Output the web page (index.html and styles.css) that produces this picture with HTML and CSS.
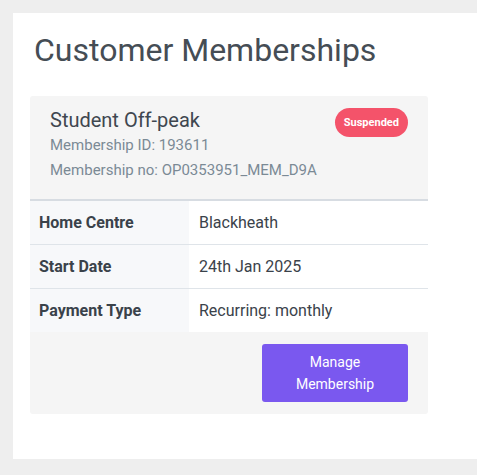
FILE: index.html
```html
<!DOCTYPE html>
<html>
<head>
<meta charset="utf-8">
<link rel="stylesheet" href="styles.css">
</head>
<body>
<div class="panel">
  <h1 class="title">Customer Memberships</h1>
  <div class="card">
    <div class="card-header">
      <div class="info">
        <h2 class="name">Student Off-peak</h2>
        <p class="meta">Membership ID: 193611</p>
        <p class="meta">Membership no: OP0353951_MEM_D9A</p>
      </div>
      <span class="badge">Suspended</span>
    </div>
    <div class="rows">
      <div class="row"><div class="label">Home Centre</div><div class="value">Blackheath</div></div>
      <div class="row"><div class="label">Start Date</div><div class="value">24th Jan 2025</div></div>
      <div class="row"><div class="label">Payment Type</div><div class="value">Recurring: monthly</div></div>
    </div>
    <div class="actions">
      <button class="btn">Manage<br>Membership</button>
    </div>
  </div>
</div>
</body>
</html>
```
FILE: styles.css
```css
html, body { overflow: hidden; }
body {
  margin: 0;
  padding: 13px 0 0 13px;
  background: #eeeeee;
  font-family: Roboto, "Liberation Sans", sans-serif;
}
.panel {
  width: 464px;
  background: #ffffff;
  padding: 17px 0 45px 17px;
  box-sizing: border-box;
}
.title {
  margin: 0 0 26px 4px;
  font-size: 32px;
  line-height: 40px;
  font-weight: 400;
  color: #454d55;
}
.card {
  width: 398px;
  background: #f5f5f5;
  border-radius: 3px;
  padding-bottom: 12px;
}
.card-header {
  display: flex;
  justify-content: space-between;
  align-items: flex-start;
  padding: 11px 20px 16px 20px;
  border-bottom: 2px solid #d7dce2;
}
.name {
  margin: 0;
  font-size: 20px;
  line-height: 26px;
  font-weight: 400;
  color: #3f4750;
}
.meta {
  margin: 0;
  font-size: 15px;
  line-height: 25px;
  color: #7b8a95;
}
.badge {
  margin-top: 1px;
  background: #f4536a;
  color: #ffffff;
  font-size: 11px;
  font-weight: 700;
  line-height: 29px;
  padding: 0 9px;
  border-radius: 15px;
}
.row {
  display: flex;
  height: 43px;
  border-bottom: 1px solid #dfe4e9;
}
.row:last-child { border-bottom: none; }
.label {
  width: 159px;
  box-sizing: border-box;
  padding-left: 9px;
  background: #f7f8fa;
  display: flex;
  align-items: center;
  font-size: 16px;
  font-weight: 700;
  color: #3a424a;
}
.value {
  flex: 1;
  padding-left: 10px;
  background: #ffffff;
  display: flex;
  align-items: center;
  font-size: 16px;
  color: #3a424a;
}
.actions {
  display: flex;
  justify-content: flex-end;
  padding: 12px 20px 0 0;
}
.btn {
  width: 146px;
  height: 58px;
  border: none;
  border-radius: 3px;
  background: #7a58ef;
  color: #ffffff;
  font-family: Roboto, "Liberation Sans", sans-serif;
  font-size: 14px;
  line-height: 22px;
}
```
